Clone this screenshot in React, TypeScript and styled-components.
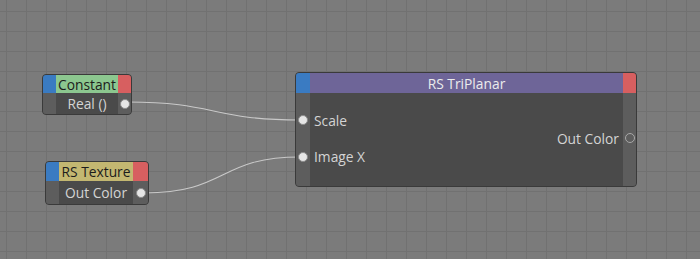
import styled, { createGlobalStyle } from "styled-components"

const GlobalStyle = createGlobalStyle`
  html, body {
    margin: 0;
    padding: 0;
    overflow: hidden;
    background: #7b7b7b;
  }
`

interface PlaceProps {
  x: number
  y: number
  w: number
}

interface NodeGridProps {
  left: number
  right: number
  head: number
  rows: string
}

interface HeaderProps {
  bg: string
  ink: string
}

interface LabelProps {
  align: "left" | "center" | "right"
  row: string
  col: string
}

interface PortProps {
  row: string
  col: string
  hollow?: boolean
}

const Canvas = styled.div`
  position: relative;
  width: 700px;
  height: 259px;
  overflow: hidden;
  background-color: #7b7b7b;
  background-image:
    linear-gradient(to right, #717171 1px, transparent 1px),
    linear-gradient(to bottom, #717171 1px, transparent 1px);
  background-size: 20px 20px;
  background-position: 6px 11px;
  font-family: "Open Sans", "Noto Sans", sans-serif;
`

const Wires = styled.svg`
  position: absolute;
  inset: 0;
  z-index: 1;
  pointer-events: none;
`

const Node = styled.div<PlaceProps>`
  position: absolute;
  left: ${({ x }) => x}px;
  top: ${({ y }) => y}px;
  width: ${({ w }) => w}px;
  z-index: 2;
  border: 1px solid #3a3a3a;
  border-radius: 4px;
  overflow: hidden;
  background: #4a4a4a;
  box-sizing: border-box;
`

const NodeGrid = styled.div<NodeGridProps>`
  display: grid;
  grid-template-columns: ${({ left, right }) => `${left}px 1fr ${right}px`};
  grid-template-rows: ${({ head, rows }) => `${head}px ${rows}`};
`

const SideColumn = styled.div<{ col: number }>`
  grid-column: ${({ col }) => col};
  grid-row: 2 / -1;
  background: #5d5d5d;
`

const Header = styled.div<HeaderProps>`
  grid-column: 2;
  grid-row: 1;
  display: flex;
  align-items: center;
  justify-content: center;
  background: ${({ bg }) => bg};
  color: ${({ ink }) => ink};
  font-size: 13.8px;
  white-space: nowrap;
  overflow: hidden;
`

const BlueTab = styled.div`
  grid-column: 1;
  grid-row: 1;
  background: #3a7bc2;
`

const RedTab = styled.div`
  grid-column: 3;
  grid-row: 1;
  background: #d75f60;
`

const Label = styled.div<LabelProps>`
  grid-row: ${({ row }) => row};
  grid-column: ${({ col }) => col};
  display: flex;
  align-items: center;
  justify-content: ${({ align }) =>
    align === "left" ? "flex-start" : align === "right" ? "flex-end" : "center"};
  padding: 0 4px;
  color: #d4d4d4;
  font-size: 13.8px;
  white-space: nowrap;
`

const Port = styled.div<PortProps>`
  grid-row: ${({ row }) => row};
  grid-column: ${({ col }) => col};
  display: flex;
  align-items: center;
  justify-content: center;

  &::after {
    content: "";
    width: 8px;
    height: 8px;
    border-radius: 50%;
    box-sizing: content-box;
    background: ${({ hollow }) => (hollow ? "transparent" : "#e6e6e6")};
    border: ${({ hollow }) => (hollow ? "1.5px solid #a8a8a8" : "1.5px solid #8c8c8c")};
  }
`

export default function App() {
  return (
    <>
      <GlobalStyle />
      <Canvas>
        <Wires width={700} height={259} viewBox="0 0 700 259">
          <path
            d="M128 102 C 215 102, 212 120, 300 120"
            fill="none"
            stroke="#c9c9c9"
            strokeWidth={1.1}
          />
          <path
            d="M144 193 C 228 193, 218 157, 300 157"
            fill="none"
            stroke="#c9c9c9"
            strokeWidth={1.1}
          />
        </Wires>

        <Node x={42} y={74} w={90}>
          <NodeGrid left={13} right={13} head={18} rows="21px">
            <BlueTab />
            <Header bg="#8cc78f" ink="#1c1c1c">Constant</Header>
            <RedTab />
            <SideColumn col={1} />
            <SideColumn col={3} />
            <Label row="2" col="2" align="center">Real ()</Label>
            <Port row="2" col="3" />
          </NodeGrid>
        </Node>

        <Node x={45} y={161} w={104}>
          <NodeGrid left={13} right={15} head={19} rows="23px">
            <BlueTab />
            <Header bg="#c3b771" ink="#1c1c1c">RS Texture</Header>
            <RedTab />
            <SideColumn col={1} />
            <SideColumn col={3} />
            <Label row="2" col="2" align="center">Out Color</Label>
            <Port row="2" col="3" />
          </NodeGrid>
        </Node>

        <Node x={295} y={72} w={342}>
          <NodeGrid left={14} right={13} head={20} rows="18px 18px 18px 19px 20px">
            <BlueTab />
            <Header bg="#6e6598" ink="#ececec">RS TriPlanar</Header>
            <RedTab />
            <SideColumn col={1} />
            <SideColumn col={3} />
            <Port row="3" col="1" />
            <Label row="3" col="2" align="left">Scale</Label>
            <Label row="4" col="2" align="right">Out Color</Label>
            <Port row="4" col="3" hollow />
            <Port row="5" col="1" />
            <Label row="5" col="2" align="left">Image X</Label>
          </NodeGrid>
        </Node>
      </Canvas>
    </>
  )
}
